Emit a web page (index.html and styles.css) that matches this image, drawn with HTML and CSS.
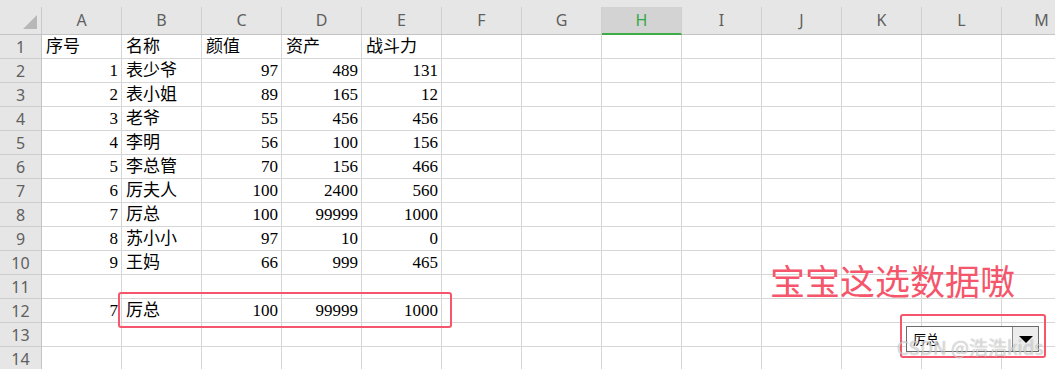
FILE: index.html
```html
<!DOCTYPE html>
<html lang="zh">
<head>
<meta charset="utf-8">
<title>Sheet</title>
<link rel="stylesheet" href="styles.css">
</head>
<body>
<div class="sheet">
  <div class="colhead">
    <div class="corner"><span class="tri"></span></div>
    <div class="ch">A</div><div class="ch">B</div><div class="ch">C</div><div class="ch">D</div><div class="ch">E</div><div class="ch">F</div><div class="ch">G</div><div class="ch sel">H</div><div class="ch">I</div><div class="ch">J</div><div class="ch">K</div><div class="ch">L</div><div class="ch">M</div>
  </div>
  <div class="rows">
    <div class="row"><div class="rh">1</div><div class="c">序号</div><div class="c">名称</div><div class="c">颜值</div><div class="c">资产</div><div class="c">战斗力</div><div class="c"></div><div class="c"></div><div class="c"></div><div class="c"></div><div class="c"></div><div class="c"></div><div class="c"></div><div class="c"></div></div>
    <div class="row"><div class="rh">2</div><div class="c n">1</div><div class="c">表少爷</div><div class="c n">97</div><div class="c n">489</div><div class="c n">131</div><div class="c"></div><div class="c"></div><div class="c"></div><div class="c"></div><div class="c"></div><div class="c"></div><div class="c"></div><div class="c"></div></div>
    <div class="row"><div class="rh">3</div><div class="c n">2</div><div class="c">表小姐</div><div class="c n">89</div><div class="c n">165</div><div class="c n">12</div><div class="c"></div><div class="c"></div><div class="c"></div><div class="c"></div><div class="c"></div><div class="c"></div><div class="c"></div><div class="c"></div></div>
    <div class="row"><div class="rh">4</div><div class="c n">3</div><div class="c">老爷</div><div class="c n">55</div><div class="c n">456</div><div class="c n">456</div><div class="c"></div><div class="c"></div><div class="c"></div><div class="c"></div><div class="c"></div><div class="c"></div><div class="c"></div><div class="c"></div></div>
    <div class="row"><div class="rh">5</div><div class="c n">4</div><div class="c">李明</div><div class="c n">56</div><div class="c n">100</div><div class="c n">156</div><div class="c"></div><div class="c"></div><div class="c"></div><div class="c"></div><div class="c"></div><div class="c"></div><div class="c"></div><div class="c"></div></div>
    <div class="row"><div class="rh">6</div><div class="c n">5</div><div class="c">李总管</div><div class="c n">70</div><div class="c n">156</div><div class="c n">466</div><div class="c"></div><div class="c"></div><div class="c"></div><div class="c"></div><div class="c"></div><div class="c"></div><div class="c"></div><div class="c"></div></div>
    <div class="row"><div class="rh">7</div><div class="c n">6</div><div class="c">厉夫人</div><div class="c n">100</div><div class="c n">2400</div><div class="c n">560</div><div class="c"></div><div class="c"></div><div class="c"></div><div class="c"></div><div class="c"></div><div class="c"></div><div class="c"></div><div class="c"></div></div>
    <div class="row"><div class="rh">8</div><div class="c n">7</div><div class="c">厉总</div><div class="c n">100</div><div class="c n">99999</div><div class="c n">1000</div><div class="c"></div><div class="c"></div><div class="c"></div><div class="c"></div><div class="c"></div><div class="c"></div><div class="c"></div><div class="c"></div></div>
    <div class="row"><div class="rh">9</div><div class="c n">8</div><div class="c">苏小小</div><div class="c n">97</div><div class="c n">10</div><div class="c n">0</div><div class="c"></div><div class="c"></div><div class="c"></div><div class="c"></div><div class="c"></div><div class="c"></div><div class="c"></div><div class="c"></div></div>
    <div class="row"><div class="rh">10</div><div class="c n">9</div><div class="c">王妈</div><div class="c n">66</div><div class="c n">999</div><div class="c n">465</div><div class="c"></div><div class="c"></div><div class="c"></div><div class="c"></div><div class="c"></div><div class="c"></div><div class="c"></div><div class="c"></div></div>
    <div class="row"><div class="rh">11</div><div class="c"></div><div class="c"></div><div class="c"></div><div class="c"></div><div class="c"></div><div class="c"></div><div class="c"></div><div class="c"></div><div class="c"></div><div class="c"></div><div class="c"></div><div class="c"></div><div class="c"></div></div>
    <div class="row"><div class="rh">12</div><div class="c n">7</div><div class="c">厉总</div><div class="c n">100</div><div class="c n">99999</div><div class="c n">1000</div><div class="c"></div><div class="c"></div><div class="c"></div><div class="c"></div><div class="c"></div><div class="c"></div><div class="c"></div><div class="c"></div></div>
    <div class="row"><div class="rh">13</div><div class="c"></div><div class="c"></div><div class="c"></div><div class="c"></div><div class="c"></div><div class="c"></div><div class="c"></div><div class="c"></div><div class="c"></div><div class="c"></div><div class="c"></div><div class="c"></div><div class="c"></div></div>
    <div class="row"><div class="rh">14</div><div class="c"></div><div class="c"></div><div class="c"></div><div class="c"></div><div class="c"></div><div class="c"></div><div class="c"></div><div class="c"></div><div class="c"></div><div class="c"></div><div class="c"></div><div class="c"></div><div class="c"></div></div>
  </div>

  <div class="mark mark-row"></div>
  <div class="callout">宝宝这选数据嗷</div>
  <div class="mark mark-combo"></div>
  <div class="combo">
    <span class="combo-text">厉总</span>
    <span class="combo-btn"><span class="arrow"></span></span>
  </div>
  <div class="watermark">CSDN @浩浩kids</div>
</div>
</body>
</html>
```

FILE: styles.css
```css
* { box-sizing: border-box; }
html, body { margin: 0; padding: 0; background: #fff; }
body { width: 1055px; height: 369px; overflow: hidden; }

.sheet {
  position: relative;
  width: 1055px;
  height: 369px;
  overflow: hidden;
}

.colhead {
  display: grid;
  grid-template-columns: 42px repeat(13, 80px);
  height: 35px;
  padding-top: 7px;
  background: #e6e6e6;
  border-bottom: 1px solid #c4c4c4;
}
.corner {
  border-right: 1px solid #c9c9c9;
  display: flex;
  align-items: flex-end;
  justify-content: flex-end;
  padding: 0 4px 5px 0;
}
.tri {
  width: 0;
  height: 0;
  border-left: 14px solid transparent;
  border-bottom: 14px solid #b7b7b7;
}
.ch {
  border-right: 1px solid #cfcfcf;
  display: flex;
  align-items: center;
  justify-content: center;
  font-family: "Noto Sans", "Liberation Sans", sans-serif;
  font-size: 16px;
  color: #5f5f5f;
  padding-bottom: 1px;
}
.ch.sel {
  background: #d3d3d3;
  color: #32a845;
  border-bottom: 2px solid #3dab46;
  margin-bottom: -1px;
}

.row {
  display: grid;
  grid-template-columns: 42px repeat(13, 80px);
  height: 24px;
}
.rh {
  background: #e6e6e6;
  border-right: 1px solid #c4c4c4;
  border-bottom: 1px solid #cdcdcd;
  display: flex;
  align-items: center;
  justify-content: center;
  font-family: "Noto Sans", "Liberation Sans", sans-serif;
  font-size: 16px;
  color: #5f5f5f;
}
.c {
  border-right: 1px solid #d6d6d6;
  border-bottom: 1px solid #d6d6d6;
  display: flex;
  align-items: center;
  padding: 0 3px 0 4px;
  font-family: "Liberation Serif", "Noto Sans CJK SC", serif;
  font-size: 17px;
  line-height: 23px;
  color: #000;
  white-space: nowrap;
}
.c.n { justify-content: flex-end; }

.mark {
  position: absolute;
  border: 2px solid #f5566b;
  border-radius: 3px;
}
.mark-row { left: 118px; top: 292px; width: 334px; height: 36px; }
.mark-combo { left: 900px; top: 314px; width: 146px; height: 44px; }

.callout {
  position: absolute;
  left: 770px;
  top: 258px;
  font-family: "Noto Sans CJK SC", sans-serif;
  font-size: 35px;
  line-height: 44px;
  color: #f5566b;
  white-space: nowrap;
}

.combo {
  position: absolute;
  left: 906px;
  top: 326px;
  width: 133px;
  height: 26px;
  background: #fff;
  border: 1px solid #6b6b6b;
  display: flex;
}
.combo-text {
  flex: 1;
  padding-left: 6px;
  font-family: "Noto Sans CJK SC", sans-serif;
  font-size: 13px;
  line-height: 24px;
  color: #000;
}
.combo-btn {
  width: 26px;
  background: #ececec;
  border-left: 1px solid #8a8a8a;
  display: flex;
  align-items: center;
  justify-content: center;
}
.arrow {
  width: 0;
  height: 0;
  border-left: 7px solid transparent;
  border-right: 7px solid transparent;
  border-top: 7px solid #000;
}

.watermark {
  position: absolute;
  left: 897px;
  top: 334px;
  font-family: "Noto Sans CJK SC", "Noto Sans", sans-serif;
  font-size: 19px;
  line-height: 26px;
  color: rgba(255, 255, 255, 0.6);
  text-shadow: 0 0 1px rgba(0, 0, 0, 0.4);
  white-space: nowrap;
}
```
